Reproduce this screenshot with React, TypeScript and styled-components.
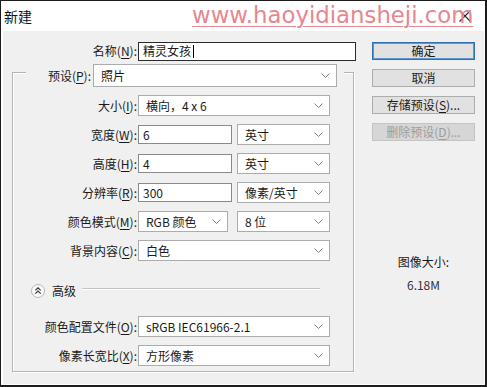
import styled, { createGlobalStyle } from 'styled-components';

const GlobalStyle = createGlobalStyle`
  html, body {
    margin: 0;
    padding: 0;
    background: #fff;
  }
  body {
    font-family: "Noto Sans CJK SC", "Noto Sans", sans-serif;
    font-size: 12px;
    color: #1a1a1a;
  }
  * {
    box-sizing: border-box;
  }
`;

const Chevron = () => (
  <svg width="9" height="5" viewBox="0 0 9 5">
    <path d="M0.5 0.5 L4.5 4.5 L8.5 0.5" fill="none" stroke="#808080" strokeWidth="1" />
  </svg>
);

const CloseIcon = () => (
  <svg width="12" height="12" viewBox="0 0 12 12">
    <path d="M0.5 0.5 L11.5 11.5 M11.5 0.5 L0.5 11.5" stroke="#2a2a2a" strokeWidth="1.1" />
  </svg>
);

const CollapseIcon = () => (
  <svg width="14" height="14" viewBox="0 0 14 14">
    <circle cx="7" cy="7" r="6.5" fill="#fbfbfb" stroke="#b8b8b8" />
    <path d="M4.3 6.4 L7 3.8 L9.7 6.4 M4.3 9.6 L7 7 L9.7 9.6" fill="none" stroke="#333" strokeWidth="1.1" />
  </svg>
);

type LabelProps = { $w: number };

export default function App() {
  return (
    <>
      <GlobalStyle />
      <Window>
        <TitleBar>
          <Title>新建</Title>
          <Close>
            <CloseIcon />
          </Close>
          <Watermark>www.haoyidiansheji.com</Watermark>
        </TitleBar>
        <Body>
          <LeftCol>
            <Row $h={18}>
              <Label $w={125}>名称(<u>N</u>):</Label>
              <Input $w={218} $focused>
                精灵女孩<Caret />
              </Input>
            </Row>

            <Group>
              <PresetRow>
                <Label $w={65}>预设(<u>P</u>):</Label>
                <Select $w={244} $h={23}>
                  照片
                  <Chevron />
                </Select>
              </PresetRow>

              <Row>
                <Label $w={124}>大小(<u>I</u>):</Label>
                <Select $w={192}>
                  横向，4 x 6
                  <Chevron />
                </Select>
              </Row>

              <Row>
                <Label $w={124}>宽度(<u>W</u>):</Label>
                <Input $w={94}>6</Input>
                <Select $w={93} $ml={5}>
                  英寸
                  <Chevron />
                </Select>
              </Row>

              <Row>
                <Label $w={124}>高度(<u>H</u>):</Label>
                <Input $w={94}>4</Input>
                <Select $w={93} $ml={5}>
                  英寸
                  <Chevron />
                </Select>
              </Row>

              <Row>
                <Label $w={124}>分辨率(<u>R</u>):</Label>
                <Input $w={94}>300</Input>
                <Select $w={93} $ml={5}>
                  像素/英寸
                  <Chevron />
                </Select>
              </Row>

              <Row>
                <Label $w={124}>颜色模式(<u>M</u>):</Label>
                <Select $w={90}>
                  RGB 颜色
                  <Chevron />
                </Select>
                <Select $w={93} $ml={9}>
                  8 位
                  <Chevron />
                </Select>
              </Row>

              <Row>
                <Label $w={124}>背景内容(<u>C</u>):</Label>
                <Select $w={192}>
                  白色
                  <Chevron />
                </Select>
              </Row>

              <AdvancedRow>
                <CollapseIcon />
                <AdvancedText>高级</AdvancedText>
                <Rule />
              </AdvancedRow>

              <Row $mt={7}>
                <Label $w={124}>颜色配置文件(<u>O</u>):</Label>
                <Select $w={192}>
                  sRGB IEC61966-2.1
                  <Chevron />
                </Select>
              </Row>

              <Row>
                <Label $w={124}>像素长宽比(<u>X</u>):</Label>
                <Select $w={192}>
                  方形像素
                  <Chevron />
                </Select>
              </Row>
            </Group>
          </LeftCol>

          <RightCol>
            <Button $primary>确定</Button>
            <Button>取消</Button>
            <Button>存储预设(<u>S</u>)...</Button>
            <Button $disabled>删除预设(<u>D</u>)...</Button>
            <SizeTitle>图像大小:</SizeTitle>
            <SizeValue>6.18M</SizeValue>
          </RightCol>
        </Body>
      </Window>
    </>
  );
}

const Window = styled.div`
  position: relative;
  width: 487px;
  height: 387px;
  display: flex;
  flex-direction: column;
  background: #fff;
  border-style: solid;
  border-color: #1c1c1c;
  border-width: 1px 2px 2px 1px;
`;

const TitleBar = styled.div`
  position: relative;
  height: 30px;
  display: flex;
  align-items: center;
  padding: 0 14px 0 3px;
`;

const Title = styled.div`
  font-size: 14px;
  line-height: 1;
  color: #111;
`;

const Close = styled.div`
  margin-left: auto;
  display: flex;
  margin-top: -1px;
`;

const Watermark = styled.div`
  position: absolute;
  left: 191px;
  top: 0;
  font-family: "DejaVu Sans", "Liberation Sans", sans-serif;
  font-size: 22.8px;
  line-height: 28px;
  color: #e8869444;
  color: #e8868f;
  text-decoration: underline;
  text-decoration-thickness: 1px;
  text-underline-offset: 3px;
  pointer-events: none;
`;

const Body = styled.div`
  flex: 1;
  display: flex;
  gap: 16px;
  margin: 0 1px 1px 2px;
  padding: 11px 8px 0 9px;
  background: #f0f0f0;
`;

const LeftCol = styled.div`
  width: 344px;
  display: flex;
  flex-direction: column;
`;

const Row = styled.div<{ $h?: number; $mt?: number }>`
  display: flex;
  align-items: center;
  height: ${(p) => p.$h ?? 21}px;
  margin-top: ${(p) => p.$mt ?? 0}px;
`;

const Label = styled.div<LabelProps>`
  width: ${(p) => p.$w}px;
  margin-right: 1px;
  text-align: right;
  white-space: nowrap;
  line-height: 1;
  color: #1a1a1a;

  u {
    text-underline-offset: 2px;
  }
`;

const Input = styled.div<{ $w: number; $focused?: boolean }>`
  width: ${(p) => p.$w}px;
  height: 19px;
  display: flex;
  align-items: center;
  padding-left: 4px;
  background: #fff;
  border: 1px solid ${(p) => (p.$focused ? '#2b2b2b' : '#8a8a8a')};
  line-height: 1;
  white-space: nowrap;
`;

const Caret = styled.span`
  display: inline-block;
  width: 1px;
  height: 13px;
  margin-left: 2px;
  background: #000;
`;

const Select = styled.div<{ $w: number; $h?: number; $ml?: number }>`
  width: ${(p) => p.$w}px;
  height: ${(p) => p.$h ?? 21}px;
  margin-left: ${(p) => p.$ml ?? 0}px;
  display: flex;
  align-items: center;
  justify-content: space-between;
  padding: 0 6px 0 7px;
  background: #fff;
  border: 1px solid #acacac;
  line-height: 1;
  white-space: nowrap;

  svg {
    flex-shrink: 0;
  }
`;

const Group = styled.div`
  margin-top: 12px;
  width: 342px;
  display: flex;
  flex-direction: column;
  gap: 8px;
  padding-bottom: 5px;
  border: 1px solid #b4b4b4;
  box-shadow: inset 1px 1px 0 #fff, 1px 1px 0 #fff;
`;

const PresetRow = styled.div`
  display: flex;
  align-items: center;
  height: 23px;
  width: 318px;
  margin: -9px 0 0 13px;
  padding-right: 7px;
  background: #f0f0f0;

  ${Label} {
    margin-right: 2px;
  }
`;

const AdvancedRow = styled.div`
  display: flex;
  align-items: center;
  height: 21px;
  margin-top: 11px;
  padding-left: 18px;

  svg {
    flex-shrink: 0;
  }
`;

const AdvancedText = styled.span`
  margin-left: 7px;
  line-height: 1;
`;

const Rule = styled.div`
  flex: 1;
  height: 2px;
  margin: -3px 33px 0 6px;
  border-top: 1px solid #c4c4c4;
  border-bottom: 1px solid #fff;
`;

const RightCol = styled.div`
  width: 103px;
  display: flex;
  flex-direction: column;
  gap: 9px;
`;

const Button = styled.div<{ $primary?: boolean; $disabled?: boolean }>`
  height: 18px;
  display: flex;
  align-items: center;
  justify-content: center;
  line-height: 1;
  white-space: nowrap;
  background: ${(p) => (p.$disabled ? '#d6d6d6' : '#e1e1e1')};
  color: ${(p) => (p.$disabled ? '#9c9c9c' : '#1a1a1a')};
  border: 1px solid ${(p) => (p.$primary ? '#2f70b4' : p.$disabled ? '#c4c4c4' : '#adadad')};
  box-shadow: ${(p) => (p.$primary ? 'inset 0 0 0 1px #5d98d2' : 'none')};

  u {
    text-underline-offset: 2px;
  }
`;

const SizeTitle = styled.div`
  margin-top: 104px;
  text-align: center;
  line-height: 16px;
`;

const SizeValue = styled.div`
  margin-top: -2px;
  text-align: center;
  line-height: 16px;
  color: #333;
`;
